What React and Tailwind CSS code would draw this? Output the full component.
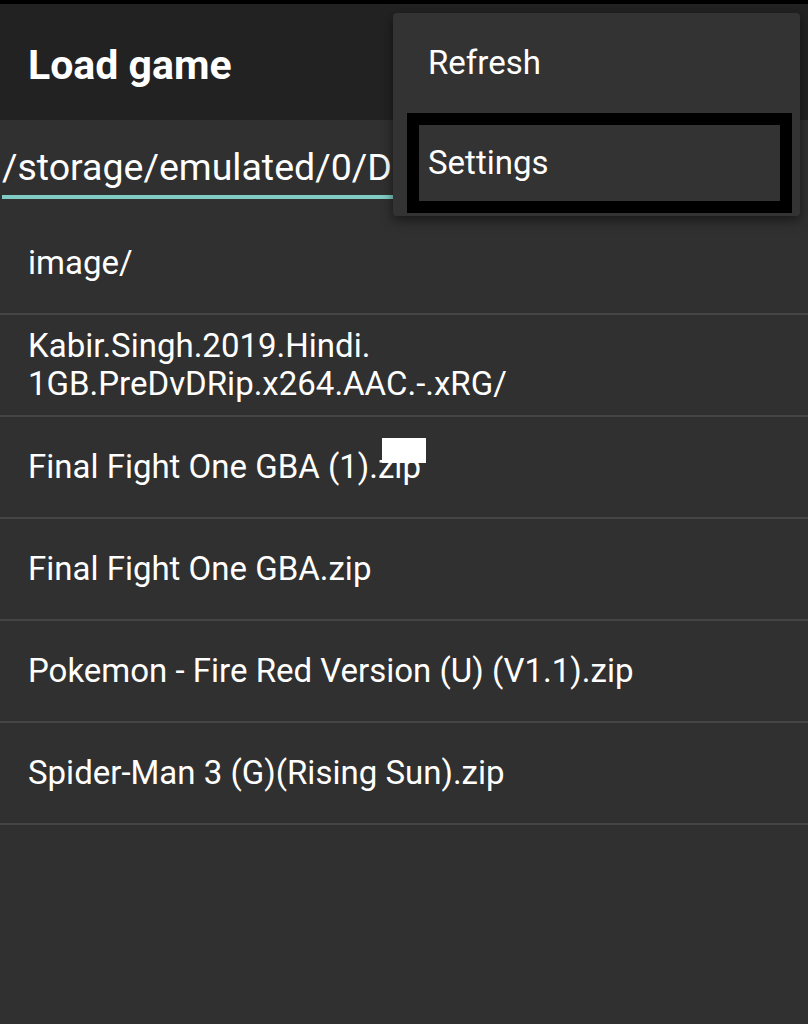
import React from 'react';

const files = [
  ['image/'],
  ['Kabir.Singh.2019.Hindi.', '1GB.PreDvDRip.x264.AAC.-.xRG/'],
  ['Final Fight One GBA (1).zip'],
  ['Final Fight One GBA.zip'],
  ['Pokemon - Fire Red Version (U) (V1.1).zip'],
  ['Spider-Man 3 (G)(Rising Sun).zip'],
];

const App = () => {
  return (
    <div className="relative w-[808px] h-[1024px] bg-[#303030] overflow-hidden text-white" style={{ fontFamily: 'Roboto, "Noto Sans", sans-serif' }}>
      <div className="h-[4px] bg-black"></div>
      <header className="h-[116px] bg-[#222222] flex items-center pl-[28px]">
        <h1 className="text-[41px] font-bold leading-[48px] pt-[6px]">Load game</h1>
      </header>

      <div className="h-[93px] pt-[20px]">
        <div className="ml-[2px] w-[391px] border-b-[4px] border-[#80cbc4] whitespace-nowrap h-[59px]">
          <span className="text-[37.5px] leading-[54px]">/storage/emulated/0/D</span>
        </div>
      </div>

      <ul>
        {files.map((lines, i) => (
          <li key={i} className="h-[102px] border-b-[2px] border-[#454545] flex flex-col justify-center pl-[28px] text-[33px] leading-[38px]">
            {lines.map((l) => (
              <span key={l}>{l}</span>
            ))}
          </li>
        ))}
      </ul>

      <div className="absolute left-[382px] top-[438px] w-[44px] h-[25px] bg-white"></div>

      <div className="absolute left-[393px] top-[13px] w-[407px] h-[203px] bg-[#333333] rounded-[4px] shadow-[0_4px_12px_rgba(0,0,0,0.5)] text-[33px]">
        <div className="h-[100px] flex items-center pl-[35px]">Refresh</div>
        <div className="ml-[14px] mr-[8px] h-[100px] border-[12px] border-black flex items-center pl-[9px]">Settings</div>
      </div>
    </div>
  );
};

export default App;
